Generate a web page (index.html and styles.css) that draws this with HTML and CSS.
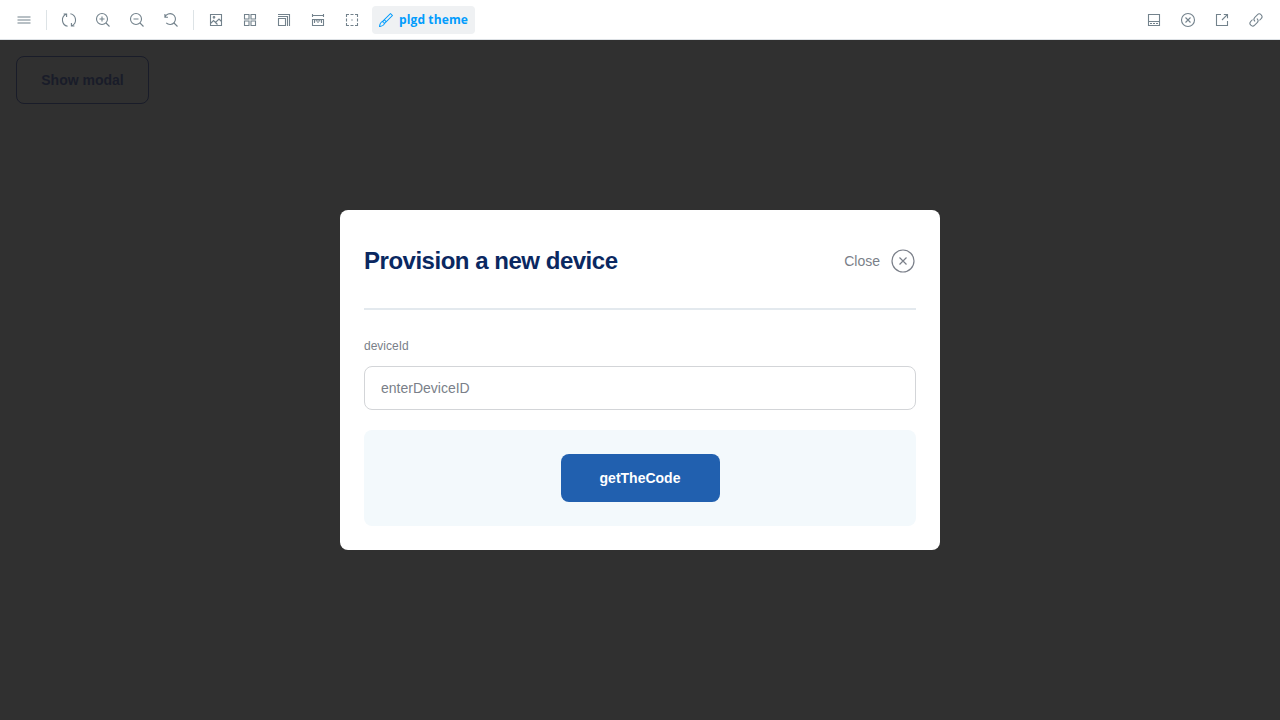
FILE: index.html
```html
<!DOCTYPE html>
<html lang="en">
<head>
<meta charset="utf-8">
<title>Provision a new device</title>
<link rel="stylesheet" href="styles.css">
</head>
<body>
<header class="toolbar">
  <div class="group">
    <button class="tool"><svg viewBox="0 0 14 14"><path class="s" d="M.5 4h13M.5 7h13M.5 10h13"/></svg></button>
    <span class="sep"></span>
    <button class="tool"><svg viewBox="0 0 14 14"><path class="s" d="M1.6 1h3v3M4 1.3A6.4 6.4 0 0 0 5.6 13.3M12.4 13h-3v-3M10 12.7A6.4 6.4 0 0 0 8.4 .7"/></svg></button>
    <button class="tool"><svg viewBox="0 0 14 14"><path class="s" d="M6 3.5v5M3.5 6h5M10 10l3.5 3.5"/><circle class="s" cx="6" cy="6" r="5.5"/></svg></button>
    <button class="tool"><svg viewBox="0 0 14 14"><path class="s" d="M3.5 6h5M10 10l3.5 3.5"/><circle class="s" cx="6" cy="6" r="5.5"/></svg></button>
    <button class="tool"><svg viewBox="0 0 14 14"><path class="s" d="M.9 1v3.2H4M1 4.2A5.4 5.4 0 1 1 2.2 9.8M10 10l3.5 3.5"/></svg></button>
    <span class="sep"></span>
    <button class="tool"><svg viewBox="0 0 14 14"><path class="s" d="M1.5 1.5h11v11h-11zM1.5 10.5l3-3 2 2 3.5-3.5 2.5 2.5M6.5 9.5l2 2"/><circle class="s" cx="5" cy="4.3" r=".8"/></svg></button>
    <button class="tool"><svg viewBox="0 0 14 14"><path class="s" d="M1.5 1.5H6V6H1.5zM8 1.5h4.5V6H8zM1.5 8H6v4.5H1.5zM8 8h4.5v4.5H8z"/></svg></button>
    <button class="tool"><svg viewBox="0 0 14 14"><path class="s" d="M1 1.5h11.5V13M1 3.5h9.5V13M1.5 5.5h7v7h-7z"/></svg></button>
    <button class="tool"><svg viewBox="0 0 14 14"><path class="s" d="M1.5 1v3M12.5 1v3M1.5 2.5h11M1.5 6.5h11v6h-11zM3.5 7v3M5.25 7v1.5M7 7v3M8.75 7v1.5M10.5 7v3"/></svg></button>
    <button class="tool"><svg viewBox="0 0 14 14"><path class="s" d="M1.5 4V1.5H4M5.5 1.5h3M10 1.5h2.5V4M12.5 5.5v3M12.5 10v2.5H10M8.5 12.5h-3M4 12.5H1.5V10M1.5 8.5v-3M6.3 7h1.4"/></svg></button>
    <button class="tool theme"><svg viewBox="0 0 14 14"><path fill="currentColor" fill-rule="evenodd" d="M11.854.146a.5.5 0 00-.707 0L2.983 8.31a2.24 2.24 0 00-1.074.6C.677 10.14.24 11.902.085 12.997 0 13.6 0 14 0 14s.4 0 1.002-.085c1.095-.155 2.857-.592 4.089-1.824a2.24 2.24 0 00.6-1.074l8.163-8.163a.5.5 0 000-.708l-2-2zM5.6 9.692l.942-.942L5.25 7.457l-.942.943A2.242 2.242 0 015.6 9.692zm1.649-1.65L12.793 2.5 11.5 1.207 5.957 6.75l1.292 1.292zM4.384 9.617a1.25 1.25 0 010 1.768c-.767.766-1.832 1.185-2.78 1.403-.17.04-.335.072-.49.098.027-.154.06-.318.099-.49.219-.947.637-2.012 1.403-2.779a1.25 1.25 0 011.768 0z"/></svg><span class="theme-name">plgd theme</span></button>
  </div>
  <div class="group">
    <button class="tool"><svg viewBox="0 0 14 14"><path class="s" d="M1.5 1.5h11v11h-11zM1.5 8.5h11M3 10.5h2M6 10.5h2M9 10.5h2"/></svg></button>
    <button class="tool"><svg viewBox="0 0 14 14"><circle class="s" cx="7" cy="7" r="6.5"/><path class="s" d="M4.5 4.5l5 5M9.5 4.5l-5 5"/></svg></button>
    <button class="tool"><svg viewBox="0 0 14 14"><path class="s" d="M6 1.5H1.5v11h11V8M8.8 1.5h3.7v3.7M12.3 1.7L7 7"/></svg></button>
    <button class="tool"><svg viewBox="0 0 14 14"><path fill="currentColor" d="M11.841 2.159a2.25 2.25 0 00-3.182 0l-2.5 2.5a2.25 2.25 0 000 3.182.5.5 0 01-.707.707 3.25 3.25 0 010-4.596l2.5-2.5a3.25 3.25 0 014.596 4.596l-2.063 2.063a4.27 4.27 0 00-.094-1.32l1.45-1.45a2.25 2.25 0 000-3.182z"/><path fill="currentColor" d="M3.61 7.21c-.1-.434-.132-.88-.095-1.321L1.452 7.952a3.25 3.25 0 104.596 4.596l2.5-2.5a3.25 3.25 0 000-4.596.5.5 0 00-.707.707 2.25 2.25 0 010 3.182l-2.5 2.5A2.25 2.25 0 112.159 8.66l1.45-1.45z"/></svg></button>
  </div>
</header>
<main class="preview">
  <button class="show">Show modal</button>
  <div class="overlay">
    <section class="modal">
      <div class="modal-head">
        <h1 class="title">Provision a new device</h1>
        <button class="close"><span class="close-text">Close</span><svg class="close-icon" viewBox="0 0 26 26"><circle cx="13" cy="13" r="11"/><path d="M9.5 9.5l7 7M16.5 9.5l-7 7"/></svg></button>
      </div>
      <label class="label" for="device">deviceId</label>
      <input class="field" id="device" placeholder="enterDeviceID">
      <div class="actions"><button class="primary"><span class="primary-text">getTheCode</span></button></div>
    </section>
  </div>
</main>
</body>
</html>
```
FILE: styles.css
```css
* { box-sizing: border-box; }
body { margin: 0; height: 720px; overflow: hidden; display: flex; flex-direction: column; font-family: "Liberation Sans", Arial, sans-serif; }
button { margin: 0; padding: 0; border: 0; background: none; font-family: inherit; white-space: nowrap; }
.toolbar { flex: none; height: 40px; padding: 0 10px; display: flex; align-items: center; justify-content: space-between; background: #fff; box-shadow: inset 0 -1px 0 #dde1e5; }
.group { display: flex; align-items: center; gap: 6px; }
.tool { width: 28px; height: 28px; display: flex; align-items: center; justify-content: center; color: #73828c; border-radius: 4px; }
.tool svg { flex: none; width: 14px; height: 14px; overflow: visible; }
.s { fill: none; stroke: currentColor; stroke-width: 1.1; }
.sep { width: 1px; height: 20px; margin: 0 2px; background: #dde3e6; }
.theme { width: 103px; padding-left: 7px; justify-content: flex-start; gap: 6px; background: #eff1f3; color: #029cfd; }
.theme-name { font: 700 12px/14px "Open Sans", "Noto Sans", sans-serif; letter-spacing: .12px; }
.preview { flex: 1; position: relative; background: #303030; padding: 16px; }
.show { width: 133px; height: 48px; border: 1px solid #191c29; border-radius: 8px; color: #191c29; font-size: 14px; font-weight: 700; }
.overlay { position: absolute; inset: 0; display: flex; align-items: center; justify-content: center; }
.modal { width: 600px; height: 340px; padding: 0 24px 24px; background: #fff; border-radius: 8px; display: flex; flex-direction: column; }
.modal-head { height: 100px; padding-top: 3px; border-bottom: 2px solid #e3e9ee; display: flex; align-items: center; justify-content: space-between; }
.title { margin: 0; font-size: 24px; line-height: 30px; font-weight: 700; letter-spacing: -.48px; color: #0a2861; }
.close { display: flex; align-items: center; gap: 10px; color: #7a7f89; font-size: 14px; }
.close-icon { width: 26px; height: 26px; fill: none; stroke: currentColor; stroke-width: 1.2; }
.label { margin-top: 28px; height: 16px; font-size: 12px; line-height: 16px; color: #7a7f89; }
.field { margin-top: 12px; height: 44px; width: 100%; padding: 0 16px; border: 1px solid #d3d5d8; border-radius: 8px; font: 14px "Liberation Sans", Arial, sans-serif; background: #fff; }
.field::placeholder { color: #7a7f89; opacity: 1; }
.actions { margin-top: 20px; height: 96px; border-radius: 8px; background: #f3f9fc; display: flex; align-items: center; justify-content: center; }
.primary { width: 159px; height: 48px; border-radius: 8px; background: #2160af; color: #fff; font-size: 14px; font-weight: 700; }
```
